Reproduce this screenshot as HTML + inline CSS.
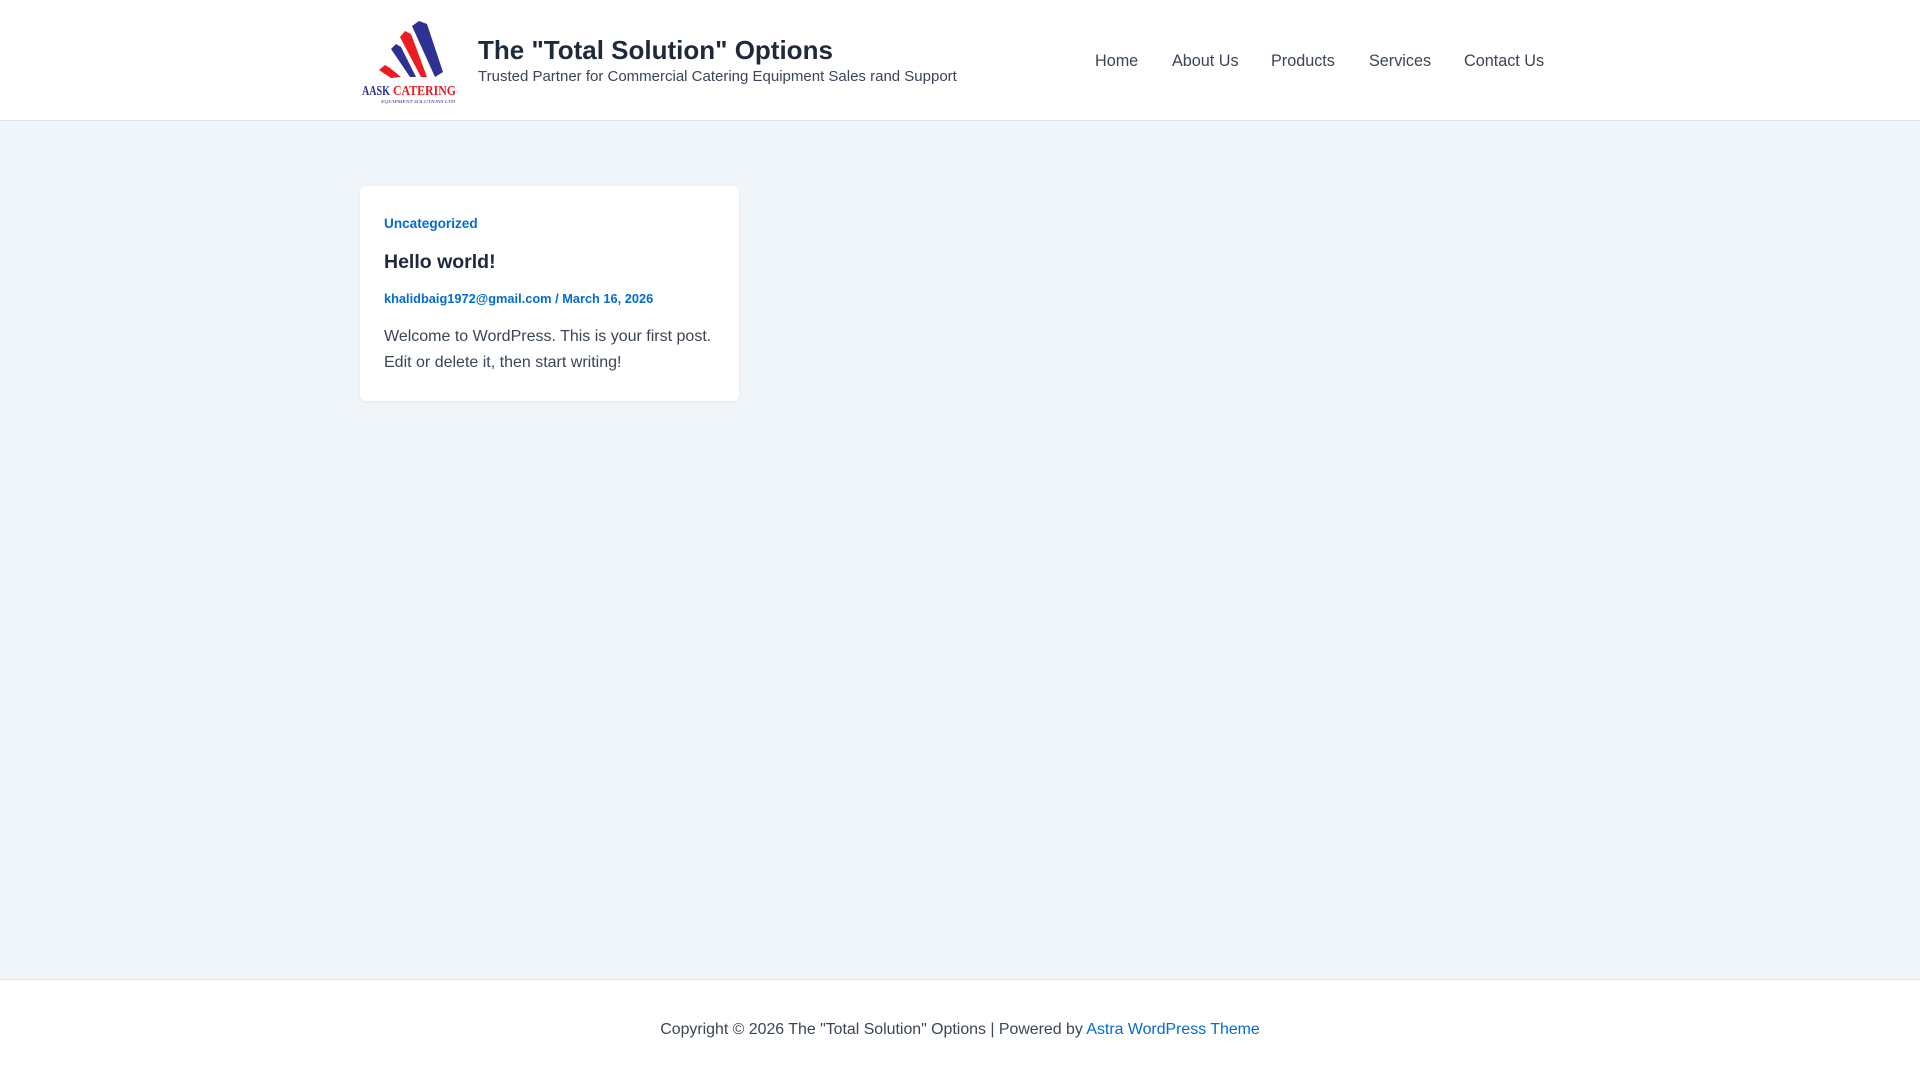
<!DOCTYPE html>
<html><head><meta charset="utf-8">
<style>
*{margin:0;padding:0;box-sizing:border-box}
body{width:1920px;height:1080px;background:#f0f5fa;font-family:"Liberation Sans",Arial,sans-serif;position:relative;overflow:hidden}
.hdr{position:absolute;left:0;top:0;width:1920px;height:121px;background:#fff;border-bottom:1px solid #dde3ea}
.logo{position:absolute;left:355px;top:10px}
.title{position:absolute;left:478px;top:35px;font-size:26px;font-weight:bold;color:#1e293b;white-space:nowrap}
.tag{position:absolute;left:478px;top:68px;font-size:15px;color:#3a4555;white-space:nowrap}
.nav a{position:absolute;top:52px;font-size:16.2px;color:#3a4555;text-decoration:none;white-space:nowrap}
.card{position:absolute;left:360px;top:186px;width:379px;height:215px;background:#fff;border-radius:6px;box-shadow:0 1px 3px rgba(0,0,0,.06)}
.cat{position:absolute;left:24px;top:30px;font-size:13.6px;font-weight:bold;color:#046bd2}
.h{position:absolute;left:24px;top:65px;font-size:19.5px;font-weight:bold;color:#1e293b}
.meta{position:absolute;left:24px;top:105px;font-size:12.8px;font-weight:bold;color:#046bd2;white-space:nowrap}
.p{position:absolute;left:24px;top:138px;font-size:16px;line-height:26px;color:#3a4555;width:350px}
.ftr{position:absolute;left:0;top:979px;width:1920px;height:101px;background:#fff;border-top:1px solid #dde3ea}
.ftr div{position:absolute;left:0;width:1920px;top:41px;text-align:center;font-size:15.9px;color:#3a4555}
.ftr span{color:#046bd2}
</style></head><body>
<div class="hdr">
<svg class="logo" width="110" height="100" viewBox="0 0 110 100">
<polygon points="57,16 64,11 72,14 88,62 80,67" fill="#2e3192"/>
<polygon points="45,27 50,21 56,24 72,67 66,67" fill="#ed1c24"/>
<polygon points="36,39 41,34 46,37 61,67 55,67" fill="#2e3192"/>
<polygon points="24,60 30,55 35,58 46,67 36,68" fill="#ed1c24"/>
<text x="7" y="85" font-family="Liberation Serif,serif" font-weight="bold" font-size="13.5" fill="#2e3192" textLength="28" lengthAdjust="spacingAndGlyphs">AASK</text>
<text x="38" y="85" font-family="Liberation Serif,serif" font-weight="bold" font-size="13.5" fill="#ed1c24" textLength="63" lengthAdjust="spacingAndGlyphs">CATERING</text>
<text x="26" y="93" font-family="Liberation Serif,serif" font-style="italic" font-size="4.5" fill="#2e3192" textLength="74" lengthAdjust="spacingAndGlyphs">EQUIPMENT SOLUTIONS LTD</text>
</svg>
<div class="title">The "Total Solution" Options</div>
<div class="tag">Trusted Partner for Commercial Catering Equipment Sales rand Support</div>
<div class="nav">
<a style="left:1095px">Home</a>
<a style="left:1172px">About Us</a>
<a style="left:1271px">Products</a>
<a style="left:1369px">Services</a>
<a style="left:1464px">Contact Us</a>
</div>
</div>
<div class="card">
<div class="cat">Uncategorized</div>
<div class="h">Hello world!</div>
<div class="meta">khalidbaig1972@gmail.com / March 16, 2026</div>
<div class="p">Welcome to WordPress. This is your first post. Edit or delete it, then start writing!</div>
</div>
<div class="ftr"><div>Copyright © 2026 The "Total Solution" Options | Powered by <span>Astra WordPress Theme</span></div></div>
</body></html>
